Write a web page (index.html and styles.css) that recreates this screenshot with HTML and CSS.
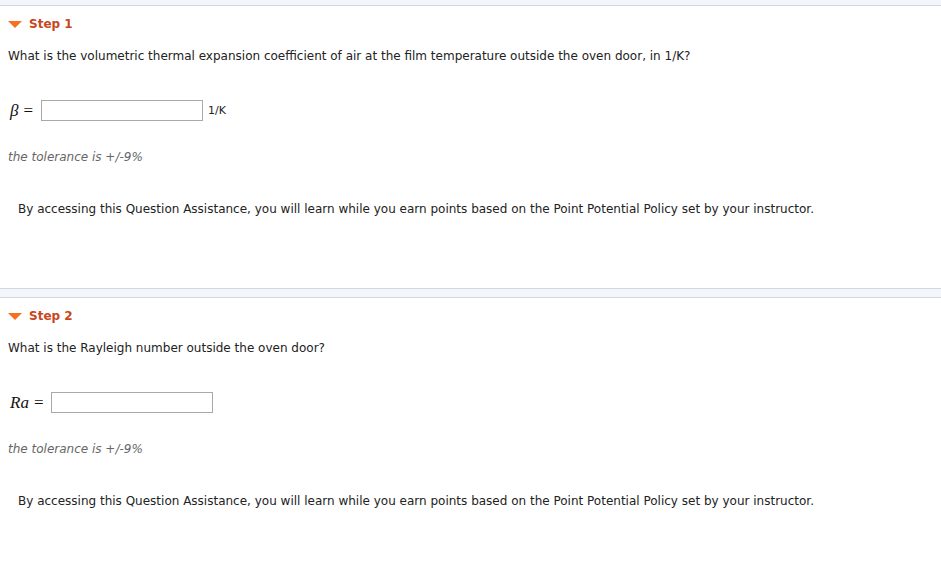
FILE: index.html
```html
<!DOCTYPE html>
<html lang="en">
<head>
    <meta charset="UTF-8">
    <title>Steps</title>
    <link rel="stylesheet" href="styles.css">
</head>
<body>
    <div class="step">
        <div class="step-head"><span class="arrow"></span>Step 1</div>
        <p class="question">What is the volumetric thermal expansion coefficient of air at the film temperature outside the oven door, in 1/K?</p>
        <div class="answer">
            <span class="math"><i>β</i><span class="eq">=</span></span>
            <input type="text" class="field">
            <span class="unit">1/K</span>
        </div>
        <p class="tolerance">the tolerance is +/-9%</p>
        <p class="assist">By accessing this Question Assistance, you will learn while you earn points based on the Point Potential Policy set by your instructor.</p>
    </div>
    <div class="step">
        <div class="step-head"><span class="arrow"></span>Step 2</div>
        <p class="question">What is the Rayleigh number outside the oven door?</p>
        <div class="answer">
            <span class="math"><i>Ra</i><span class="eq">=</span></span>
            <input type="text" class="field">
        </div>
        <p class="tolerance">the tolerance is +/-9%</p>
        <p class="assist">By accessing this Question Assistance, you will learn while you earn points based on the Point Potential Policy set by your instructor.</p>
    </div>
</body>
</html>
```

FILE: styles.css
```css
body {
    margin: 0;
    padding-top: 5px;
    background-color: #f3f6fa;
    font-family: "DejaVu Sans", Verdana, sans-serif;
    font-size: 12px;
    color: #222;
}
.step {
    background-color: #fff;
    border-top: 1px solid #d0d8e2;
    border-bottom: 1px solid #d0d8e2;
    height: 282px;
    margin-bottom: 8px;
    padding: 0 8px;
}
.step-head {
    display: flex;
    align-items: center;
    height: 34px;
    padding-top: 1px;
    font-weight: bold;
    font-size: 12px;
    color: #c8461a;
}
.arrow {
    width: 0;
    height: 0;
    border-left: 7px solid transparent;
    border-right: 7px solid transparent;
    border-top: 7px solid #f7701f;
    margin-right: 7px;
}
.question {
    margin: 0;
    height: 30px;
    line-height: 30px;
}
.answer {
    display: flex;
    align-items: center;
    height: 21px;
    margin-top: 29px;
}
.math {
    font-family: "Liberation Serif", "DejaVu Serif", serif;
    font-size: 17px;
    padding-left: 2px;
    margin-right: 8px;
    color: #111;
}
.eq {
    margin-left: 5px;
}
.field {
    width: 162px;
    height: 21px;
    box-sizing: border-box;
    border: 1px solid #a9a9a9;
    margin: 0;
    padding: 0;
}
.unit {
    font-size: 11px;
    margin-left: 5px;
}
.tolerance {
    margin: 29px 0 0;
    font-style: italic;
    color: #666;
}
.assist {
    margin: 38px 0 0 10px;
}
```
